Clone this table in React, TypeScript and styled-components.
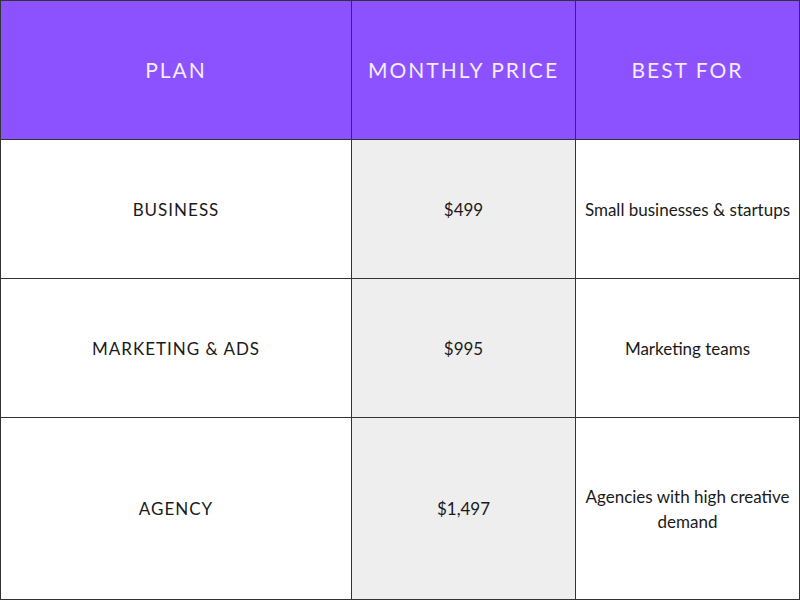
import React from "react";
import styled, { createGlobalStyle } from "styled-components";

const Global = createGlobalStyle`
  html, body { margin: 0; padding: 0; background: #ffffff; }
  body { font-family: "Lato", "Open Sans", sans-serif; }
`;

const Table = styled.div`
  width: 800px;
  height: 600px;
  box-sizing: border-box;
  padding: 1px;
  background: #333333;
  display: grid;
  grid-template-columns: 350px 223px 223px;
  grid-template-rows: 138px 138px 138px 181px;
  gap: 1px;
`;

const Cell = styled.div<{ $head?: boolean; $shade?: boolean }>`
  display: flex;
  align-items: center;
  justify-content: center;
  text-align: center;
  padding: ${(p) => (p.$head ? "0 8px 2px" : "0 8px")};
  box-sizing: border-box;
  background: ${(p) => (p.$head ? "#8c52ff" : p.$shade ? "#eeeeee" : "#ffffff")};
  color: ${(p) => (p.$head ? "#f3ecff" : "#1a1a1a")};
  font-size: ${(p) => (p.$head ? "21px" : "17px")};
  letter-spacing: ${(p) => (p.$head ? "2px" : "0")};
  line-height: 25px;
`;

const Caps = styled.span`
  text-transform: uppercase;
  letter-spacing: 1px;
`;

const rows = [
  { plan: "Business", price: "$499", best: "Small businesses & startups" },
  { plan: "Marketing & Ads", price: "$995", best: "Marketing teams" },
  { plan: "Agency", price: "$1,497", best: "Agencies with high creative demand" },
];

export default function App() {
  return (
    <>
      <Global />
      <Table>
        <Cell $head>PLAN</Cell>
        <Cell $head>MONTHLY PRICE</Cell>
        <Cell $head>BEST FOR</Cell>
        {rows.map((r) => (
          <React.Fragment key={r.plan}>
            <Cell>
              <Caps>{r.plan}</Caps>
            </Cell>
            <Cell $shade>{r.price}</Cell>
            <Cell>{r.best}</Cell>
          </React.Fragment>
        ))}
      </Table>
    </>
  );
}
